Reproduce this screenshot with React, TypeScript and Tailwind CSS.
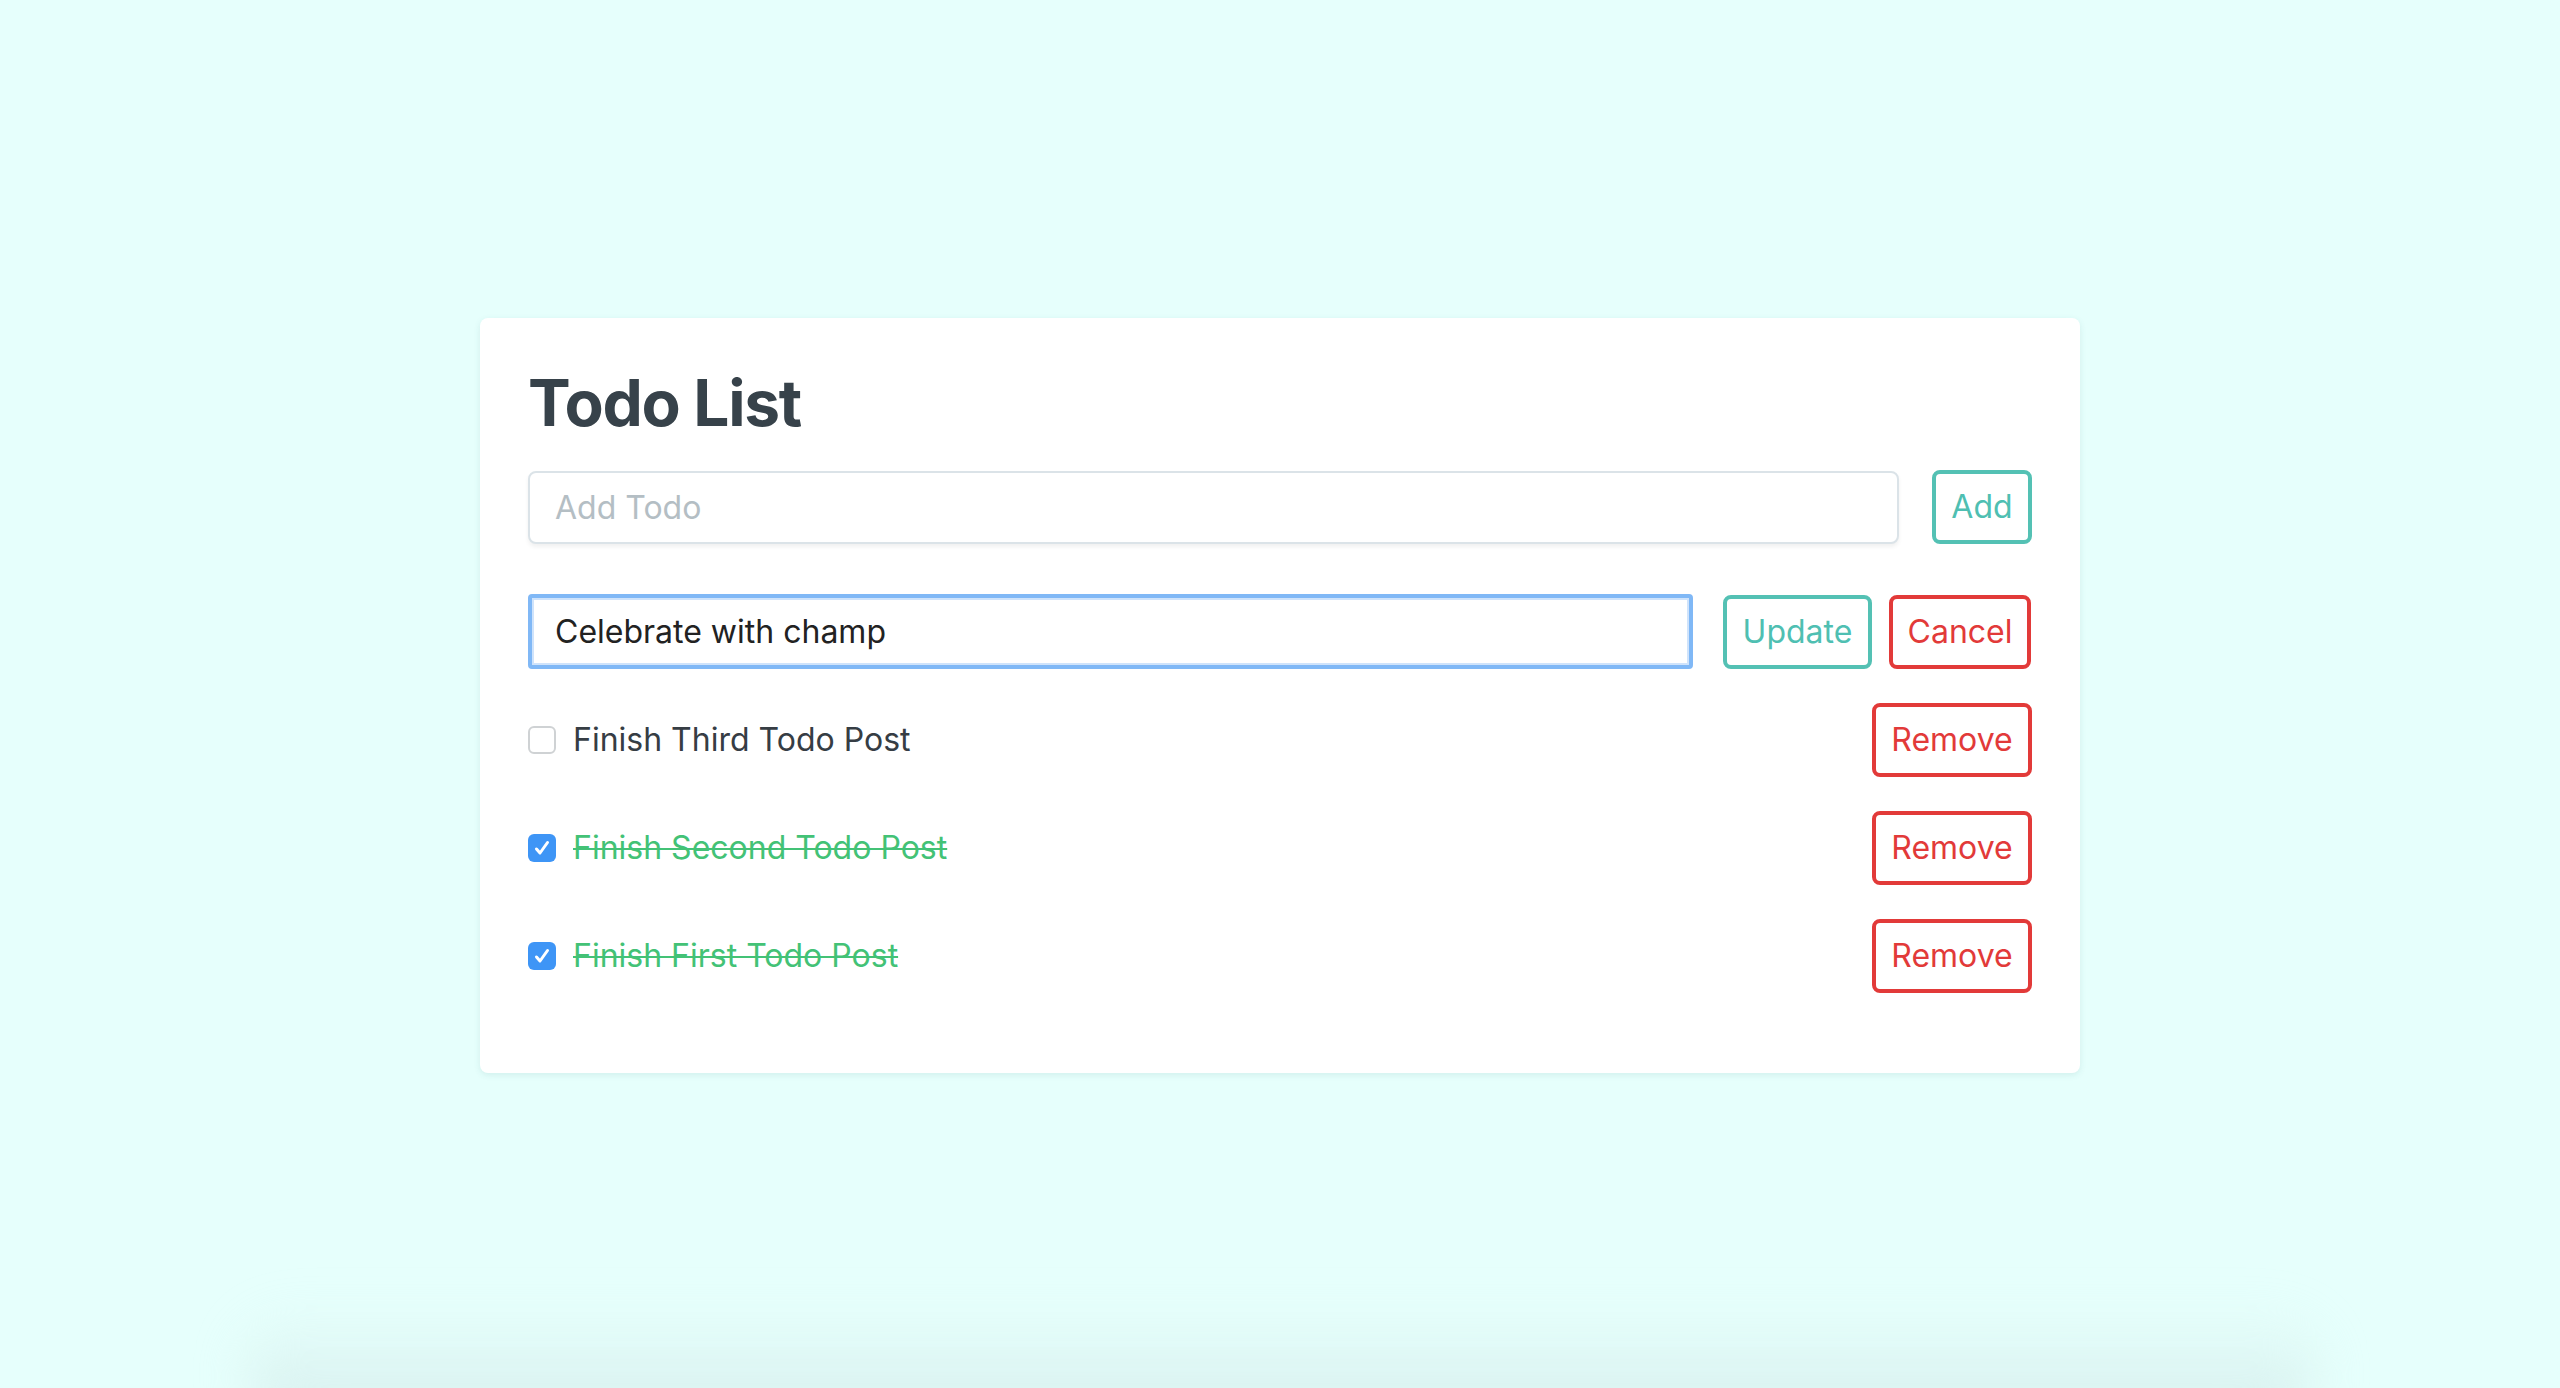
import React, { useState } from 'react';

type Todo = { id: number; text: string; done: boolean };

function CheckBox({ checked, onChange }: { checked: boolean; onChange: () => void }) {
    return (
        <button
            onClick={onChange}
            className={
                checked
                    ? 'flex h-[28px] w-[28px] shrink-0 items-center justify-center rounded-[6px] bg-[#3e95f6]'
                    : 'flex h-[28px] w-[28px] shrink-0 items-center justify-center rounded-[6px] border-2 border-[#cfd2d4] bg-white'
            }
        >
            {checked && (
                <svg width="22" height="22" viewBox="0 0 22 22" fill="none">
                    <path d="M5.5 12 L9 16 L16.5 5.5" stroke="white" strokeWidth="3" strokeLinecap="round" strokeLinejoin="round" />
                </svg>
            )}
        </button>
    );
}

function App() {
    const [todos, setTodos] = useState<Todo[]>([
        { id: 3, text: 'Finish Third Todo Post', done: false },
        { id: 2, text: 'Finish Second Todo Post', done: true },
        { id: 1, text: 'Finish First Todo Post', done: true },
    ]);
    const [newTodo, setNewTodo] = useState('');
    const [editText, setEditText] = useState('Celebrate with champ');

    const toggle = (id: number) => {
        setTodos(todos.map((t) => (t.id === id ? { ...t, done: !t.done } : t)));
    };

    const remove = (id: number) => {
        setTodos(todos.filter((t) => t.id !== id));
    };

    const add = () => {
        if (newTodo.trim() === '') return;
        setTodos([{ id: Date.now(), text: newTodo.trim(), done: false }, ...todos]);
        setNewTodo('');
    };

    return (
        <div className="relative min-h-screen overflow-hidden bg-[#e6fffc] pt-[318px] font-['Inter',sans-serif]">
            <div className="mx-auto w-[1600px] rounded-[8px] bg-white px-[48px] pb-[80px] pt-[53px] shadow-[0_2px_6px_rgba(60,120,120,0.12)]">
                <h1 className="text-[64px] font-bold leading-none tracking-[-0.02em] text-[#37424a]">Todo List</h1>

                <div className="mt-[35px] flex items-center gap-[33px]">
                    <input
                        type="text"
                        placeholder="Add Todo"
                        value={newTodo}
                        onChange={(e) => setNewTodo(e.target.value)}
                        className="h-[73px] flex-1 rounded-[8px] border-2 border-[#dbe3e8] bg-white px-[25px] text-[32px] text-[#222] shadow-[0_3px_4px_rgba(0,0,0,0.06)] outline-none placeholder:text-[#b4bec4]"
                    />
                    <button
                        onClick={add}
                        className="h-[74px] w-[100px] rounded-[8px] border-4 border-[#54c1b4] text-[32px] text-[#4fbfb2]"
                    >
                        Add
                    </button>
                </div>

                <div className="mt-[50px] flex items-center">
                    <input
                        type="text"
                        value={editText}
                        onChange={(e) => setEditText(e.target.value)}
                        className="h-[75px] w-[1165px] rounded-[4px] border-4 border-[#80b8f6] bg-white px-[23px] text-[32px] text-[#222] shadow-[inset_0_0_0_2px_#cfe3fb] outline-none"
                    />
                    <button className="ml-[30px] h-[74px] w-[149px] rounded-[8px] border-4 border-[#54c1b4] text-[32px] text-[#4fbfb2]">
                        Update
                    </button>
                    <button className="ml-[17px] h-[74px] w-[142px] rounded-[8px] border-4 border-[#e23a39] text-[32px] text-[#e23a39]">
                        Cancel
                    </button>
                </div>

                <div className="mt-[34px] flex flex-col gap-[34px]">
                    {todos.map((todo) => (
                        <div key={todo.id} className="flex items-center">
                            <CheckBox checked={todo.done} onChange={() => toggle(todo.id)} />
                            <span
                                className={
                                    todo.done
                                        ? 'ml-[17px] flex-1 text-[32px] text-[#43c276] line-through decoration-2'
                                        : 'ml-[17px] flex-1 text-[32px] text-[#363d44]'
                                }
                            >
                                {todo.text}
                            </span>
                            <button
                                onClick={() => remove(todo.id)}
                                className="h-[74px] w-[160px] rounded-[8px] border-4 border-[#e23a39] text-[32px] text-[#e23a39]"
                            >
                                Remove
                            </button>
                        </div>
                    ))}
                </div>
            </div>
            <div className="pointer-events-none absolute bottom-[-40px] left-[245px] right-[242px] h-[120px] rounded-[60px] bg-gradient-to-b from-transparent to-[#d6eeec] blur-xl" />
        </div>
    );
}

export default App;
